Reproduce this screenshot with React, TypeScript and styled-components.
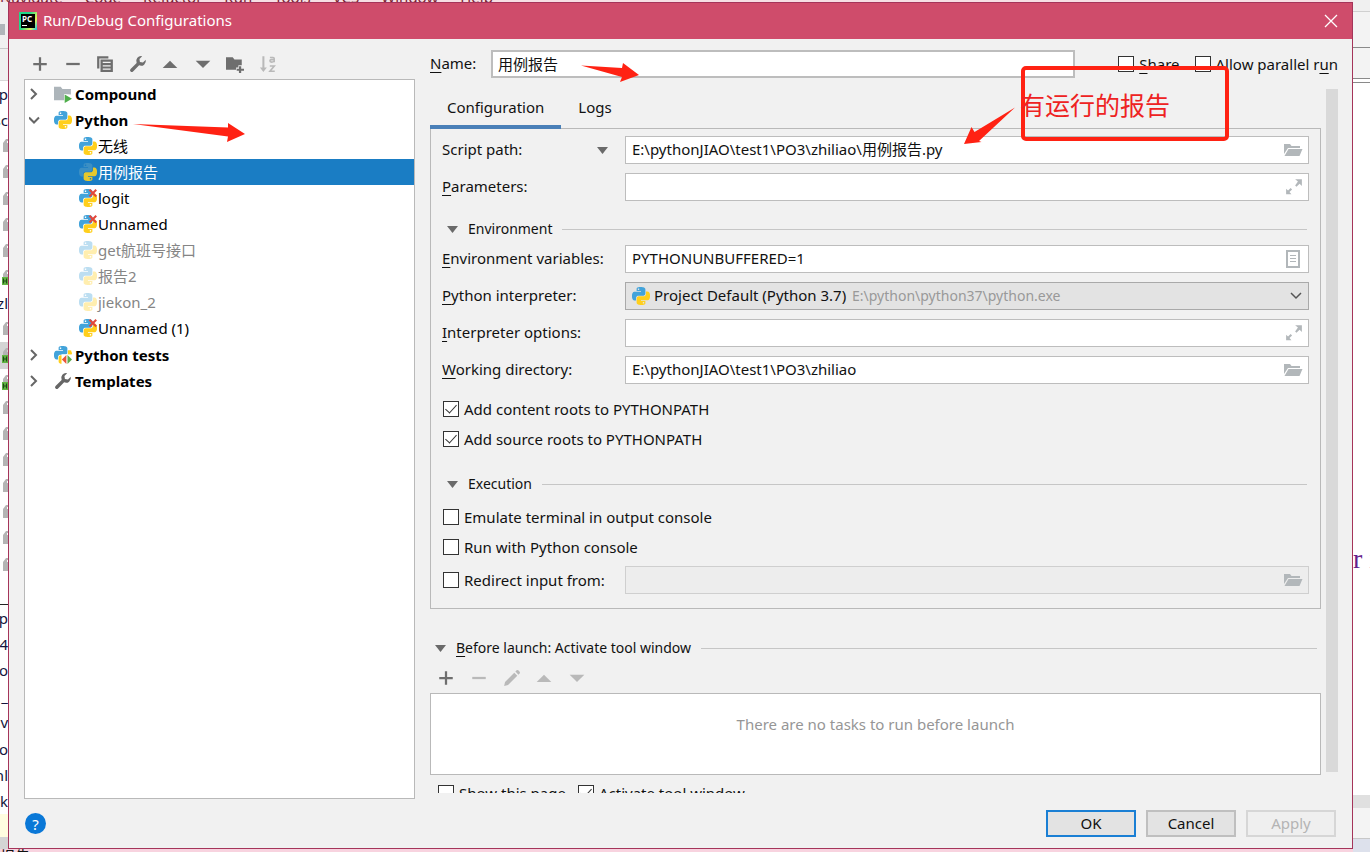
import React from "react";
import styled, { createGlobalStyle, css } from "styled-components";

const Global = createGlobalStyle`
  *, *::before, *::after { box-sizing: border-box; }
  body { margin: 0; background: #fff; }
  body, button, input, select {
    font-family: "Noto Sans", "Noto Sans CJK SC", sans-serif;
    font-size: 15px;
    line-height: 20px;
    color: #111;
  }
  ul { list-style: none; margin: 0; padding: 0; }
  u { text-underline-offset: 3px; text-decoration-thickness: 1px; }
  svg { display: block; flex: none; }
`;

/* ---------- window behind the dialog ---------- */

const Page = styled.div`
  position: relative;
  display: grid;
  grid-template: 2px minmax(0, 1fr) 3px / 8px minmax(0, 1fr) 17px;
  height: 100vh;
  overflow: hidden;
`;

const MenuSliver = styled.div`
  grid-column: 1 / 3;
  display: flex;
  align-items: flex-end;
  gap: 22px;
  overflow: hidden;
  background: #f6dfe4;
  color: #7a1f33;
  white-space: nowrap;
  line-height: 10px;
`;

const BottomSliver = styled.div`
  grid-column: 1 / 3;
  overflow: hidden;
  background: #f8d3df;
  line-height: 15px;
`;

const ProjectStrip = styled.div`
  display: flex;
  flex-direction: column;
  overflow: hidden;
  background: #fff;
`;

const StripTop = styled.div`
  flex: none;
  height: 47px;
  padding-top: 22px;
  background: #f0f0f0;
  border-bottom: 1px solid #c8c8c8;
`;

const StripBlock = styled.div`
  width: 5px;
  height: 11px;
  background: #b0b6ba;
`;

const StripHeader = styled.div`
  flex: none;
  height: 32px;
  background: #f0f0f0;
  border-bottom: 1px solid #d8d8d8;
`;

const StripRow = styled.div<{ $bg?: string; $line?: boolean }>`
  flex: 1;
  min-height: 0;
  display: flex;
  align-items: center;
  justify-content: flex-end;
  overflow: hidden;
  color: #14143c;
  background: ${(p) => p.$bg || "transparent"};
  ${(p) => p.$line && css`border-bottom: 1px solid #222;`}
`;

const StripYellow = styled.div`
  flex: none;
  height: 23px;
  background: #fffde0;
`;

const StripStatus = styled.div`
  flex: none;
  height: 12px;
  background: #d4d4d4;
`;

const EditorStrip = styled.div`
  grid-area: 1 / 3 / 4 / 4;
  display: flex;
  flex-direction: column;
  background: #fff;
  overflow: hidden;
`;

const EditorBar = styled.div<{ $h: number; $bg: string; $line: string }>`
  flex: none;
  height: ${(p) => p.$h}px;
  background: ${(p) => p.$bg};
  border-bottom: 1px solid ${(p) => p.$line};
`;

const EditorCode = styled.div`
  flex: 1;
  display: flex;
  align-items: center;
  padding-top: 240px;
  overflow: hidden;
  font-family: "Liberation Serif", serif;
  font-size: 28px;
  color: #66208c;
  white-space: nowrap;
`;

/* ---------- dialog frame ---------- */

const Dialog = styled.main`
  display: flex;
  flex-direction: column;
  min-height: 0;
  border: 1px solid #a5345a;
  background: #f1f1f1;
`;

const TitleBar = styled.header`
  flex: none;
  display: flex;
  align-items: center;
  height: 36px;
  padding: 0 12px 0 10px;
  gap: 6px;
  background: #cf4c6b;
`;

const Title = styled.h1`
  flex: 1;
  margin: 0;
  padding-bottom: 2px;
  font-size: 15px;
  font-weight: 400;
  color: #fff;
`;

const AppBadge = styled.span`
  display: flex;
  width: 18px;
  height: 18px;
  padding: 2px;
  background: linear-gradient(120deg, #21d789 40%, #e8f35a 75%, #07c3f2);
`;

const AppBadgeFace = styled.span`
  flex: 1;
  padding-left: 1px;
  background: #000;
  color: #fff;
  font-size: 8px;
  font-weight: 700;
  line-height: 9px;
  &::after {
    content: "";
    display: block;
    width: 5px;
    height: 1px;
    margin-top: 2px;
    background: #fff;
  }
`;

const IconButton = styled.button`
  display: grid;
  place-items: center;
  width: 18px;
  height: 18px;
  padding: 0;
  border: 0;
  background: none;
  color: #6e6e6e;
  &:disabled { color: #b9b9b9; }
`;

const CloseButton = styled(IconButton)`
  color: #fff;
`;

const Body = styled.div`
  flex: 1;
  min-height: 0;
  display: grid;
  grid-template-columns: 391px minmax(0, 1fr);
  gap: 15px;
  padding: 11px 14px 0 15px;
`;

const Footer = styled.footer`
  flex: none;
  display: flex;
  align-items: center;
  gap: 10px;
  height: 49px;
  padding: 0 16px;
`;

const HelpButton = styled.button`
  width: 21px;
  height: 21px;
  margin-right: auto;
  padding: 0;
  border: 0;
  border-radius: 50%;
  background: #0a78d7;
  color: #fff;
`;

const PushButton = styled.button<{ $primary?: boolean }>`
  width: 90px;
  height: 27px;
  padding: 0 0 2px;
  border: 2px solid ${(p) => (p.$primary ? "#1a7fd4" : "#bfbfbf")};
  background: #e3e3e3;
  line-height: 18px;
  &:disabled {
    border-color: #d6d6d6;
    background: #efefef;
    color: #b4b4b4;
  }
`;

/* ---------- configuration tree ---------- */

const TreeColumn = styled.section`
  display: flex;
  flex-direction: column;
  min-height: 0;
`;

const Toolbar = styled.div<{ $width: number }>`
  flex: none;
  display: flex;
  align-items: center;
  justify-content: space-between;
  width: ${(p) => p.$width}px;
  height: 29px;
  padding: 0 0 2px 7px;
`;

const Tree = styled.ul`
  flex: 1;
  min-height: 0;
  padding-top: 1px;
  border: 1px solid #b9b9b9;
  background: #fff;
`;

const TreeChildren = styled.ul`
  padding-bottom: 1px;
`;

const TreeRow = styled.div<{ $child?: boolean; $selected?: boolean; $muted?: boolean }>`
  display: flex;
  align-items: center;
  gap: ${(p) => (p.$child ? 1 : 3)}px;
  height: 26px;
  padding-left: ${(p) => (p.$child ? 54 : 4)}px;
  font-weight: ${(p) => (p.$child ? 400 : 700)};
  color: ${(p) => (p.$selected ? "#fff" : p.$muted ? "#858585" : "#000")};
  background: ${(p) => (p.$selected ? "#1a7dc4" : "transparent")};
  & > svg { opacity: ${(p) => (p.$muted ? 0.35 : 1)}; }
`;

const Twisty = styled.span`
  width: 22px;
  color: #555;
`;

/* ---------- settings form ---------- */

const FormColumn = styled.section`
  display: flex;
  flex-direction: column;
  gap: 11px;
  min-height: 0;
  padding-bottom: 6px;
`;

const NameRow = styled.div`
  flex: none;
  display: flex;
  align-items: center;
  gap: 14px;
  height: 28px;
`;

const NameLabel = styled.label`
  width: 47px;
  padding-bottom: 2px;
`;

const fieldFrame = css`
  height: 28px;
  border: 1px solid #bdbdbd;
  background: #fff;
`;

const NameInput = styled.input`
  ${fieldFrame}
  flex: 1;
  min-width: 0;
  margin-right: 28px;
  padding: 0 5px 2px;
  border-width: 2px;
`;

const CheckLabel = styled.label`
  display: flex;
  align-items: center;
  gap: 5px;
  height: 30px;
  padding-left: 1px;
  white-space: nowrap;
`;

const CheckText = styled.span`
  padding-bottom: 1px;
`;

const CheckBox = styled.input.attrs({ type: "checkbox" })`
  appearance: none;
  flex: none;
  display: grid;
  place-items: center;
  width: 16px;
  height: 16px;
  margin: 0;
  border: 1px solid #333;
  background: #fff;
  &:checked::after {
    content: "";
    width: 6px;
    height: 11px;
    margin-bottom: 3px;
    border: solid #333;
    border-width: 0 1px 1px 0;
    transform: rotate(42deg);
  }
`;

const ScrollArea = styled.div`
  flex: 1;
  min-height: 0;
  display: flex;
  gap: 5px;
  overflow: hidden;
`;

const ScrollContent = styled.div`
  flex: 1;
  min-width: 0;
`;

const ScrollThumb = styled.div`
  width: 12px;
  height: 97%;
  background: #d9d9d9;
`;

const Tabs = styled.div`
  position: relative;
  display: flex;
  height: 40px;
  margin-bottom: -1px;
`;

const Tab = styled.button<{ $active?: boolean }>`
  padding: 0 17px;
  border: 0;
  border-bottom: 4px solid ${(p) => (p.$active ? "#4a80b8" : "transparent")};
  background: none;
`;

const Panel = styled.div`
  padding: 7px 11px 13px;
  border: 1px solid #b9b9b9;
`;

const FieldGrid = styled.div`
  display: grid;
  grid-template-columns: 183px minmax(0, 1fr);
  row-gap: 9px;
  align-items: center;
`;

const RedirectGrid = styled(FieldGrid)`
  margin-top: 3px;
`;

const FieldLabel = styled.label`
  padding-bottom: 2px;
`;

const DropLabel = styled.span`
  display: flex;
  align-items: center;
  justify-content: space-between;
  padding-right: 17px;
`;

const Field = styled.div<{ $shade?: "combo" | "off" }>`
  ${fieldFrame}
  display: flex;
  align-items: center;
  padding: 0 5px 0 6px;
  color: #b2b7ba;
  ${(p) => p.$shade === "combo" && css`background: #e3e3e3; border-color: #a9a9a9;`}
  ${(p) => p.$shade === "off" && css`background: #ededed; border-color: #cfcfcf;`}
`;

const FieldInput = styled.input`
  flex: 1;
  min-width: 0;
  padding: 0 0 2px;
  border: 0;
  background: none;
`;

const ComboSelect = styled.select`
  appearance: none;
  flex: none;
  margin: 0 5px 0 4px;
  padding: 0 0 2px;
  border: 0;
  background: none;
`;

const ComboPath = styled.span`
  flex: 1;
  overflow: hidden;
  font-size: 14px;
  color: #999;
  white-space: nowrap;
`;

const CheckGroup = styled.div<{ $top: number }>`
  display: flex;
  flex-direction: column;
  align-items: flex-start;
  padding-top: ${(p) => p.$top}px;
`;

const SectionHeader = styled.h2<{ $top: number; $end?: number }>`
  display: flex;
  align-items: center;
  gap: 10px;
  height: 32px;
  margin: ${(p) => p.$top}px ${(p) => p.$end || 2}px 0 5px;
  font-size: 14px;
  font-weight: 400;
  &::after {
    content: "";
    flex: 1;
    height: 1px;
    background: #c6c6c6;
  }
`;

const TaskList = styled.div`
  height: 82px;
  padding-top: 20px;
  border: 1px solid #b9b9b9;
  background: #fff;
  color: #969696;
  text-align: center;
`;

const LaunchOptions = styled.div`
  display: flex;
  gap: 11px;
  padding: 3px 7px 0;
`;

/* ---------- red markup on top ---------- */

const Arrow = styled.svg<{ $x: number; $y: number }>`
  position: absolute;
  left: ${(p) => p.$x}px;
  top: ${(p) => p.$y}px;
  pointer-events: none;
  fill: #ff2213;
`;

const MarkBox = styled.div`
  position: absolute;
  left: 1021px;
  top: 66px;
  width: 208px;
  height: 75px;
  padding-top: 17px;
  border: 4px solid #ff2213;
  border-radius: 5px;
  pointer-events: none;
`;

const MarkText = styled.p`
  margin: 0 0 0 -5px;
  font-size: 25px;
  line-height: 36px;
  color: #ee2222;
  white-space: nowrap;
`;

/* ---------- icons ---------- */

type Glyph = { children: React.ReactNode; size?: number };
const Icon = ({ children, size = 18 }: Glyph) => (
  <svg width={size} height={size} viewBox="0 0 16 16" fill="currentColor" aria-hidden="true">
    {children}
  </svg>
);

const Plus = () => <Icon><path d="M7 2h2v5h5v2H9v5H7V9H2V7h5z" /></Icon>;
const Minus = () => <Icon><path d="M2 7h12v2H2z" /></Icon>;
const Up = () => <Icon><path d="M1.5 11.5 8 5l6.500 6.500z" /></Icon>;
const Down = () => <Icon><path d="M1.500 5h13L8 11.500z" /></Icon>;
const Copy = () => (
  <Icon>
    <path d="M1 1h10v2H3v9H1z" />
    <path fillRule="evenodd" d="M4 4h11v11H4zM6 6v1.200h7V6zM6 9v1.200h7V9zM6 12v1.200h7V12z" />
  </Icon>
);
const wrench =
  "M14.900 4.300a4.300 4.300 0 0 1-5.900 4.900L3.600 14.600a1.500 1.500 0 0 1-2.200-2.200L6.800 7a4.300 4.300 0 0 1 4.900-5.900L9.300 3.600l.4 2.700 2.700.4z";
const Wrench = () => <Icon><path d={wrench} /></Icon>;
const FolderPlus = () => (
  <Icon>
    <path d="M0 2h6l1.500 2H14v5h-3v2H9v2H0z" />
    <path d="M11.500 10h2v2.200H16v1.900h-2.500V16h-2v-1.900H9.500v-1.900h2z" />
  </Icon>
);
const SortIcon = () => (
  <Icon>
    <path d="M3 1h1.800v10H7l-3.100 4L.8 11H3z" />
    <path
      fill="none"
      stroke="currentColor"
      strokeWidth="1.400"
      d="M9.700 2.200h2.800q1 0 1 1v3.300M13.500 4.100h-2.400q-1.400 0-1.400 1.100t1.400 1.100q1.600 0 2.400-.8M9.600 9.800h4l-3.900 4.700h4.300"
    />
  </Icon>
);
const Pencil = () => (
  <Icon><path d="M10 3.300 12.700 6 4.500 14.200 1 15l.8-3.500zM11 2.300l1.100-1.100q.8-.6 1.500 0l1.200 1.200q.6.700 0 1.500L13.700 5z" /></Icon>
);
const OpenFolder = () => (
  <svg width="20" height="16" viewBox="0 0 20 16" fill="currentColor" aria-hidden="true">
    <path d="M1 2h6l1.500 2H17v2H5L1 12z" />
    <path d="M5.500 7H19.500l-3 7H1.500z" />
  </svg>
);
const Expand = () => (
  <Icon>
    <path d="M9 1h6v6l-2-2-2.800 2.800-1.200-1.200L11.500 3z" />
    <path d="M1 9.500l1.700 1.700 2.300-2.300 1.300 1.300L4 12.500 5.700 14.500H1z" />
  </Icon>
);
const ListIcon = () => (
  <svg width="20" height="18" viewBox="0 0 20 18" fill="currentColor" aria-hidden="true">
    <path fillRule="evenodd" d="M3 0h14v18H3zM5 2v14h10V2z" />
    <path d="M7 5h6v1H7zM7 8h6v1H7zM7 11h6v1H7z" />
  </svg>
);
const Triangle = () => (
  <svg width="11" height="7" viewBox="0 0 11 7" fill="#6a6a6a" aria-hidden="true"><path d="M0 0h11L5.500 7z" /></svg>
);
const Chevron = ({ open }: { open?: boolean }) => (
  <svg width="12" height="12" viewBox="0 0 12 12" fill="none" stroke="#666" strokeWidth="2" aria-hidden="true">
    <path d={open ? "M0 3.500l5 5 5-5" : "M2 1l5 5-5 5"} />
  </svg>
);
const ComboArrow = () => (
  <svg width="14" height="12" viewBox="0 0 14 12" fill="none" stroke="#555" strokeWidth="1.500" aria-hidden="true">
    <path d="M2 3l5 5 5-5" />
  </svg>
);

const snakeTop =
  "M14.250.180l.9.200.730.260.590.300.450.320.340.340.250.340.160.330.1.300.040.260.020.200-.010.130V8.500l-.050.630-.130.550-.210.460-.260.380-.300.310-.330.250-.350.190-.350.140-.330.100-.300.070-.260.040-.210.020H8.770l-.690.050-.590.140-.500.220-.410.270-.330.320-.270.350-.200.360-.150.370-.100.350-.070.320-.040.270-.020.210v3.060H3.170l-.210-.030-.280-.070-.320-.120-.350-.180-.360-.260-.360-.360-.350-.460-.320-.590-.280-.730-.210-.880-.140-1.050-.050-1.230.060-1.220.160-1.040.240-.870.320-.710.360-.570.400-.440.420-.330.420-.240.400-.160.360-.100.320-.050.240-.010h.160l.060.010h8.160v-.830H6.180l-.010-2.750-.020-.370.050-.340.110-.310.170-.280.250-.260.310-.230.380-.200.440-.180.510-.150.580-.120.640-.100.710-.060.770-.040.840-.020 1.270.050zM7.950 2.160l-.230.330-.080.410.080.410.230.340.330.220.410.090.410-.090.330-.220.230-.340.080-.410-.080-.410-.230-.330-.330-.220-.410-.090-.410.090z";
const snakeBottom =
  "M21.040 6.110l.280.060.320.120.350.180.360.270.360.350.350.470.320.590.280.730.210.880.140 1.040.050 1.230-.060 1.230-.160 1.040-.240.860-.320.710-.360.570-.400.450-.420.330-.420.240-.400.160-.360.090-.320.050-.240.020-.160-.010h-8.220v.820h5.840l.010 2.760.020.360-.050.340-.110.310-.170.290-.250.250-.310.240-.380.200-.440.170-.510.150-.580.130-.640.090-.710.070-.770.040-.840.010-1.270-.040-1.070-.140-.900-.200-.730-.250-.590-.300-.450-.330-.340-.340-.250-.340-.160-.330-.100-.300-.040-.250-.020-.200.010-.130v-5.340l.050-.640.130-.540.210-.460.260-.380.300-.320.330-.240.350-.200.350-.140.330-.100.300-.060.260-.040.210-.020.130-.010h5.840l.690-.050.590-.140.500-.210.410-.280.330-.320.270-.350.200-.360.150-.360.100-.350.070-.320.040-.280.020-.210V6.070h2.090l.140.010zM14.570 20.360l-.230.330-.080.410.080.410.230.330.330.230.410.080.410-.080.330-.230.230-.330.080-.410-.080-.410-.230-.330-.330-.230-.410-.080-.410.080z";

const PythonIcon = ({ mark, dim }: { mark?: "error" | "tests"; dim?: boolean }) => (
  <svg width="18" height="18" viewBox="0 0 24 24" aria-hidden="true">
    <path fill={dim ? "#3b8fc4" : "#42a3da"} fillRule="evenodd" d={snakeTop} />
    <path fill={dim ? "#e6c82c" : "#ffcf1c"} fillRule="evenodd" d={snakeBottom} />
    {mark === "error" && <path d="M14 1l9 9M23 1l-9 9" stroke="#e2473c" strokeWidth="2.800" />}
    {mark === "tests" && (
      <>
        <path fill="#fff" d="M10 11h14v13H10z" />
        <path fill="#e8553a" d="M16.500 12v12L10.500 18z" />
        <path fill="#5bab4d" d="M18 12v12L24 18z" />
        <path fill="#ffcf1c" d="M19 6h4v5h-4z" />
      </>
    )}
  </svg>
);
const CompoundIcon = () => (
  <Icon>
    <path fill="#adb5ba" d="M0 1.500h6l1.500 2H15v5L9 8v5.500H0z" />
    <path fill="#4fae4b" d="M9.500 8.500 16 12.200 9.500 16z" />
  </Icon>
);
const TemplatesIcon = () => (
  <svg width="18" height="18" viewBox="0 0 16 16" fill="#666" aria-hidden="true"><path d={wrench} /></svg>
);
const LockIcon = ({ green }: { green?: boolean }) => (
  <svg width="6" height="18" viewBox="0 0 6 18" aria-hidden="true">
    <path fill="#b4b4b4" d="M1 6 4 2h2v2H5v2h1v3H1z" />
    <path fill={green ? "#62b543" : "#b4b4b4"} d={green ? "M0 9h6v8H0z" : "M1 9h5v6H1z"} />
    {green && <path d="M1.500 10.500v5M4.500 10.500v5M1.500 13h3" stroke="#1d4a16" strokeWidth="1.200" />}
  </svg>
);

/* ---------- data ---------- */

type Entry = { name: string; muted?: boolean; selected?: boolean; error?: boolean };
const pythonConfigs: Entry[] = [
  { name: "无线" },
  { name: "用例报告", selected: true },
  { name: "logit", error: true },
  { name: "Unnamed", error: true },
  { name: "get航班号接口", muted: true },
  { name: "报告2", muted: true },
  { name: "jiekon_2", muted: true },
  { name: "Unnamed (1)", error: true },
];

const strip = [
  "p", "sc", "#", "#", "#", "#", "#", "#g", "zl", "#", "#gs", "#g", "#", "#",
  "#", "#", "#", "#", "#", "-", "p", "4", "o", "_", "v", "o", "nl", "k",
];

const menu = ["Navigate", "Code", "Refactor", "Run", "Tools", "VCS", "Window", "Help"];

/* ---------- parts ---------- */

const Check = ({ children, on }: { children: React.ReactNode; on?: boolean }) => (
  <CheckLabel>
    <CheckBox defaultChecked={on} />
    <CheckText>{children}</CheckText>
  </CheckLabel>
);

type TextFieldProps = { id: string; value?: string; icon: React.ReactNode; off?: boolean; label?: string };
const TextField = ({ id, value = "", icon, off, label }: TextFieldProps) => (
  <Field $shade={off ? "off" : undefined}>
    <FieldInput id={id} defaultValue={value} disabled={off} aria-label={label} />
    {icon}
  </Field>
);

export default function App() {
  return (
    <Page>
      <Global />
      <MenuSliver aria-hidden="true">
        {menu.map((m) => <span key={m}>{m}</span>)}
      </MenuSliver>

      <ProjectStrip aria-hidden="true">
        <StripTop><StripBlock /></StripTop>
        <StripHeader />
        {strip.map((s, i) => (
          <StripRow key={i} $bg={s === "#gs" ? "#d4d4d4" : undefined} $line={s === "-"}>
            {s[0] === "#" ? <LockIcon green={s.includes("g")} /> : s === "-" ? null : s}
          </StripRow>
        ))}
        <StripYellow />
        <StripStatus />
      </ProjectStrip>

      <Dialog>
        <TitleBar>
          <AppBadge aria-hidden="true"><AppBadgeFace>PC</AppBadgeFace></AppBadge>
          <Title>Run/Debug Configurations</Title>
          <CloseButton aria-label="Close">
            <svg width="14" height="14" viewBox="0 0 14 14" stroke="currentColor" strokeWidth="1.300">
              <path d="M1 1l12 12M13 1L1 13" />
            </svg>
          </CloseButton>
        </TitleBar>

        <Body>
          <TreeColumn>
            <Toolbar $width={253}>
              <IconButton aria-label="Add"><Plus /></IconButton>
              <IconButton aria-label="Remove"><Minus /></IconButton>
              <IconButton aria-label="Copy"><Copy /></IconButton>
              <IconButton aria-label="Edit templates"><Wrench /></IconButton>
              <IconButton aria-label="Move up"><Up /></IconButton>
              <IconButton aria-label="Move down"><Down /></IconButton>
              <IconButton aria-label="New folder"><FolderPlus /></IconButton>
              <IconButton aria-label="Sort" disabled><SortIcon /></IconButton>
            </Toolbar>
            <Tree>
              <li>
                <TreeRow><Twisty><Chevron /></Twisty><CompoundIcon />Compound</TreeRow>
              </li>
              <li>
                <TreeRow><Twisty><Chevron open /></Twisty><PythonIcon />Python</TreeRow>
                <TreeChildren>
                  {pythonConfigs.map((c) => (
                    <li key={c.name}>
                      <TreeRow $child $selected={c.selected} $muted={c.muted}>
                        <PythonIcon mark={c.error ? "error" : undefined} dim={c.selected} />
                        {c.name}
                      </TreeRow>
                    </li>
                  ))}
                </TreeChildren>
              </li>
              <li>
                <TreeRow><Twisty><Chevron /></Twisty><PythonIcon mark="tests" />Python tests</TreeRow>
              </li>
              <li>
                <TreeRow><Twisty><Chevron /></Twisty><TemplatesIcon />Templates</TreeRow>
              </li>
            </Tree>
          </TreeColumn>

          <FormColumn>
            <NameRow>
              <NameLabel htmlFor="name"><u>N</u>ame:</NameLabel>
              <NameInput id="name" defaultValue="用例报告" />
              <Check><u>S</u>hare</Check>
              <Check>Allow parallel r<u>u</u>n</Check>
            </NameRow>

            <ScrollArea>
              <ScrollContent>
                <Tabs role="tablist">
                  <Tab role="tab" aria-selected="true" $active>Configuration</Tab>
                  <Tab role="tab" aria-selected="false">Logs</Tab>
                </Tabs>
                <Panel>
                  <FieldGrid>
                    <DropLabel><FieldLabel htmlFor="script">Script path:</FieldLabel><Triangle /></DropLabel>
                    <TextField id="script" value="E:\pythonJIAO\test1\PO3\zhiliao\用例报告.py" icon={<OpenFolder />} />
                    <FieldLabel htmlFor="params"><u>P</u>arameters:</FieldLabel>
                    <TextField id="params" icon={<Expand />} />
                  </FieldGrid>

                  <SectionHeader $top={12}><Triangle />Environment</SectionHeader>
                  <FieldGrid>
                    <FieldLabel htmlFor="env"><u>E</u>nvironment variables:</FieldLabel>
                    <TextField id="env" value="PYTHONUNBUFFERED=1" icon={<ListIcon />} />
                    <FieldLabel htmlFor="interp"><u>P</u>ython interpreter:</FieldLabel>
                    <Field $shade="combo">
                      <PythonIcon />
                      <ComboSelect id="interp"><option>Project Default (Python 3.7)</option></ComboSelect>
                      <ComboPath>E:\python\python37\python.exe</ComboPath>
                      <ComboArrow />
                    </Field>
                    <FieldLabel htmlFor="opts"><u>I</u>nterpreter options:</FieldLabel>
                    <TextField id="opts" icon={<Expand />} />
                    <FieldLabel htmlFor="cwd"><u>W</u>orking directory:</FieldLabel>
                    <TextField id="cwd" value="E:\pythonJIAO\test1\PO3\zhiliao" icon={<OpenFolder />} />
                  </FieldGrid>
                  <CheckGroup $top={10}>
                    <Check on>Add content roots to PYTHONPATH</Check>
                    <Check on>Add source roots to PYTHONPATH</Check>
                  </CheckGroup>

                  <SectionHeader $top={14}><Triangle />Execution</SectionHeader>
                  <CheckGroup $top={2}>
                    <Check>Emulate terminal in output console</Check>
                    <Check>Run with Python console</Check>
                  </CheckGroup>
                  <RedirectGrid>
                    <Check>Redirect input from:</Check>
                    <TextField id="redirect" label="Input file" off icon={<OpenFolder />} />
                  </RedirectGrid>
                </Panel>

                <SectionHeader $top={23} $end={4}>
                  <Triangle /><span><u>B</u>efore launch: Activate tool window</span>
                </SectionHeader>
                <Toolbar $width={156}>
                  <IconButton aria-label="Add task"><Plus /></IconButton>
                  <IconButton aria-label="Remove task" disabled><Minus /></IconButton>
                  <IconButton aria-label="Edit task" disabled><Pencil /></IconButton>
                  <IconButton aria-label="Move task up" disabled><Up /></IconButton>
                  <IconButton aria-label="Move task down" disabled><Down /></IconButton>
                </Toolbar>
                <TaskList>There are no tasks to run before launch</TaskList>
                <LaunchOptions>
                  <Check>Show this page</Check>
                  <Check on>Activate tool window</Check>
                </LaunchOptions>
              </ScrollContent>
              <ScrollThumb />
            </ScrollArea>
          </FormColumn>
        </Body>

        <Footer>
          <HelpButton aria-label="Help">?</HelpButton>
          <PushButton $primary>OK</PushButton>
          <PushButton>Cancel</PushButton>
          <PushButton disabled>Apply</PushButton>
        </Footer>
      </Dialog>

      <BottomSliver aria-hidden="true">报告</BottomSliver>

      <EditorStrip aria-hidden="true">
        <EditorBar $h={12} $bg="#f0f0f0" $line="#d0d0d0" />
        <EditorBar $h={36} $bg="#f3f3f3" $line="#8a8a8a" />
        <EditorBar $h={31} $bg="#f3f3f3" $line="#8a8a8a" />
        <EditorBar $h={4} $bg="#ffffff" $line="#8a8a8a" />
        <EditorCode>r i</EditorCode>
        <EditorBar $h={13} $bg="#e0e0e0" $line="#e0e0e0" />
        <EditorBar $h={31} $bg="#f4f4f4" $line="#c8c8c8" />
        <EditorBar $h={13} $bg="#dde1ec" $line="#dde1ec" />
      </EditorStrip>

      <Arrow $x={133} $y={122} width="112" height="22" viewBox="0 0 112 22">
        <path d="M0 2 95 5.500 95 1 112 12 94 20 95 14.500z" />
      </Arrow>
      <Arrow $x={580} $y={62} width="60" height="22" viewBox="0 0 60 22">
        <path d="M1 3.500 42 6 43 1 59 13 40 20 42 15z" />
      </Arrow>
      <Arrow $x={963} $y={106} width="54" height="40" viewBox="0 0 54 40">
        <path d="M52 1.500 16 35 18.500 36 1 38 8.500 21 11.500 26z" />
      </Arrow>
      <MarkBox><MarkText>有运行的报告</MarkText></MarkBox>
    </Page>
  );
}
